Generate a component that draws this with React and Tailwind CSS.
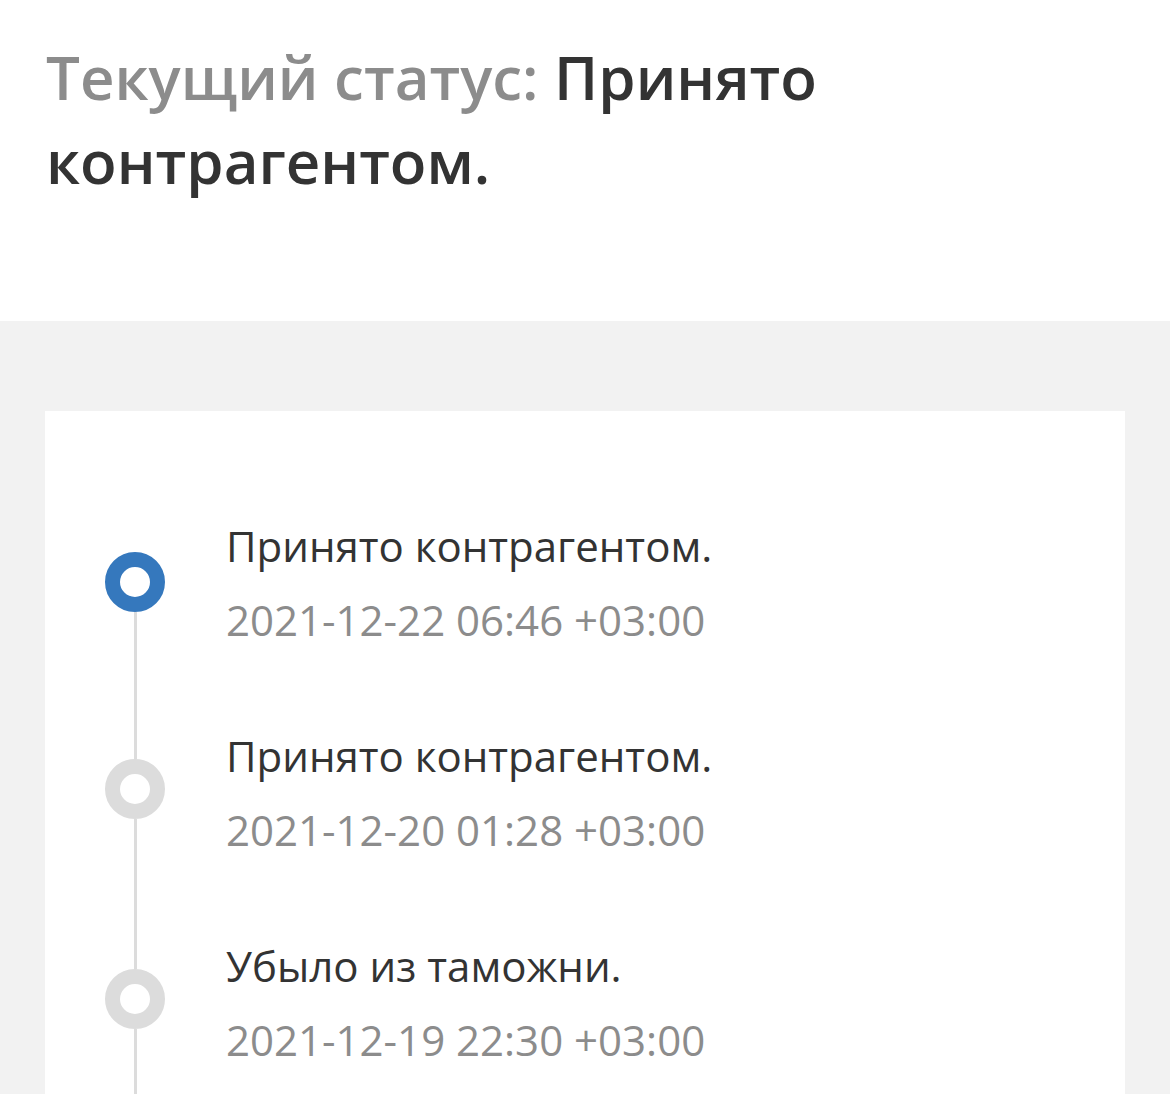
export default function App() {
  const items = [
    { title: "Принято контрагентом.", date: "2021-12-22 06:46 +03:00", active: true },
    { title: "Принято контрагентом.", date: "2021-12-20 01:28 +03:00" },
    { title: "Убыло из таможни.", date: "2021-12-19 22:30 +03:00" },
  ];
  return (
    <div className="w-[1170px] h-[1094px] overflow-hidden bg-[#f2f2f2]" style={{ fontFamily: '"Open Sans", sans-serif' }}>
      <div className="h-[321px] bg-white px-[46px] pt-[35px]">
        <h1 className="text-[60px] leading-[84px] font-semibold text-[#333333]">
          <span className="text-[#8c8c8c]">Текущий статус: </span>Принято контрагентом.
        </h1>
      </div>
      <div className="px-[45px] pt-[90px]">
        <div className="bg-white pt-[96px] h-[800px]">
          {items.map((it, i) => (
            <div key={i} className="flex h-[210px]">
              <div className="ml-[60px] w-[60px] flex flex-col items-center">
                <div className={`w-[3px] ${i === 0 ? "h-[45px] bg-transparent" : "h-[42px] bg-[#dcdcdc]"}`} />
                <div className={`w-[60px] h-[60px] rounded-full border-[15px] bg-white ${it.active ? "border-[#3578bd]" : "border-[#dcdcdc]"}`} />
                <div className="flex-1 w-[3px] bg-[#dcdcdc]" />
              </div>
              <div className="ml-[61px] pt-[11px]">
                <div className="text-[42px] leading-[56px] text-[#333333]">{it.title}</div>
                <div className="mt-[18px] text-[42px] leading-[56px] text-[#8c8c8c]">{it.date}</div>
              </div>
            </div>
          ))}
        </div>
      </div>
    </div>
  );
}
